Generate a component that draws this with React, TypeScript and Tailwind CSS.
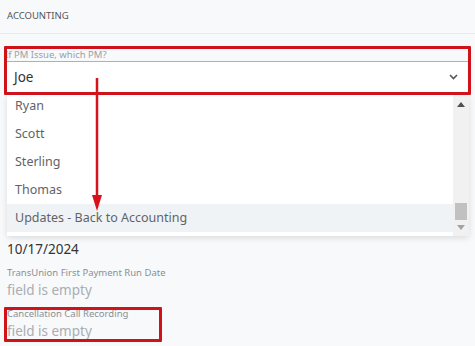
import React from "react";

const font = { fontFamily: '"Noto Sans", "Open Sans", sans-serif' };

function Field({ label, value, empty }: { label: string; value: string; empty?: boolean }) {
  return (
    <div className="pb-[7px]">
      <div className="h-[14px] leading-[14px] text-[9.5px] text-[#8a8f95]">{label}</div>
      <div className={`h-[20px] leading-[20px] text-[13.5px] ${empty ? "text-[#a9adb2]" : "text-[#333]"}`}>{value}</div>
    </div>
  );
}

export default function App() {
  const items = ["Ryan", "Scott", "Sterling", "Thomas", "Updates - Back to Accounting"];
  return (
    <div className="relative w-[475px] h-[346px] overflow-hidden bg-[#f8f9fb]" style={font}>
      <div className="h-[34px] flex items-center px-[7px] text-[9.5px] text-[#555] border-b border-[#ede9ea]">
        ACCOUNTING
      </div>
      <div className="mt-[14px] px-[7px]">
        <div className="h-[14px] leading-[14px] text-[9.5px] text-[#9aa0a6] border-b border-[#7ec3d3] -ml-[2px]">If PM Issue, which PM?</div>
        <div className="h-[30px] bg-white flex items-center justify-between pl-[7px] pr-[9px] text-[13.5px] text-[#333] mr-[1px]">
          <span>Joe</span>
          <svg width="9" height="6" viewBox="0 0 9 6"><path d="M1 1 L4.5 4.6 L8 1" stroke="#555" strokeWidth="1.5" fill="none" /></svg>
        </div>
        <div className="mt-[10px]">
          <div className="h-[123px]" />
          <Field label="Cancellation Date" value="10/17/2024" />
          <Field label="TransUnion First Payment Run Date" value="field is empty" empty />
          <Field label="Cancellation Call Recording" value="field is empty" empty />
        </div>
      </div>

      {/* dropdown menu */}
      <div className="absolute left-[7px] top-[95px] w-[462px] h-[141px] bg-white shadow-[0_2px_6px_rgba(0,0,0,0.12)] flex overflow-hidden">
        <div className="flex-1 pb-[4px] overflow-hidden">
          <div className="mt-[-3px]">
            {items.map((it, i) => (
              <div
                key={it}
                className={`h-[28px] flex items-center pl-[8px] text-[12.5px] text-[#5f6368] ${i === 4 ? "bg-[#f0f3f6]" : ""}`}
              >
                {it}
              </div>
            ))}
          </div>
        </div>
        <div className="w-[16px] bg-[#f1f1f1] flex flex-col items-center">
          <svg className="mt-[7px]" width="8" height="5" viewBox="0 0 8 5"><path d="M0 5 L4 0 L8 5 Z" fill="#505050" /></svg>
          <div className="flex-1" />
          <div className="w-[12px] h-[17px] bg-[#c1c1c1]" />
          <svg className="mt-[5px] mb-[6px]" width="8" height="5" viewBox="0 0 8 5"><path d="M0 0 L4 5 L8 0 Z" fill="#a3a3a3" /></svg>
        </div>
      </div>

      {/* annotations */}
      <div className="absolute left-[4px] top-[46px] w-[467px] h-[49px] border-[3px] border-[#d0121b] rounded-[1px]" />
      <div className="absolute left-[4px] top-[307px] w-[158px] h-[35px] border-[3px] border-[#d0121b] rounded-[1px]" />
      <svg className="absolute left-[90px] top-[78px]" width="14" height="136" viewBox="0 0 14 136">
        <line x1="7" y1="0" x2="7" y2="120" stroke="#d8121b" strokeWidth="2.5" />
        <path d="M2 117 L12 117 L7 133 Z" fill="#d8121b" />
      </svg>
    </div>
  );
}
